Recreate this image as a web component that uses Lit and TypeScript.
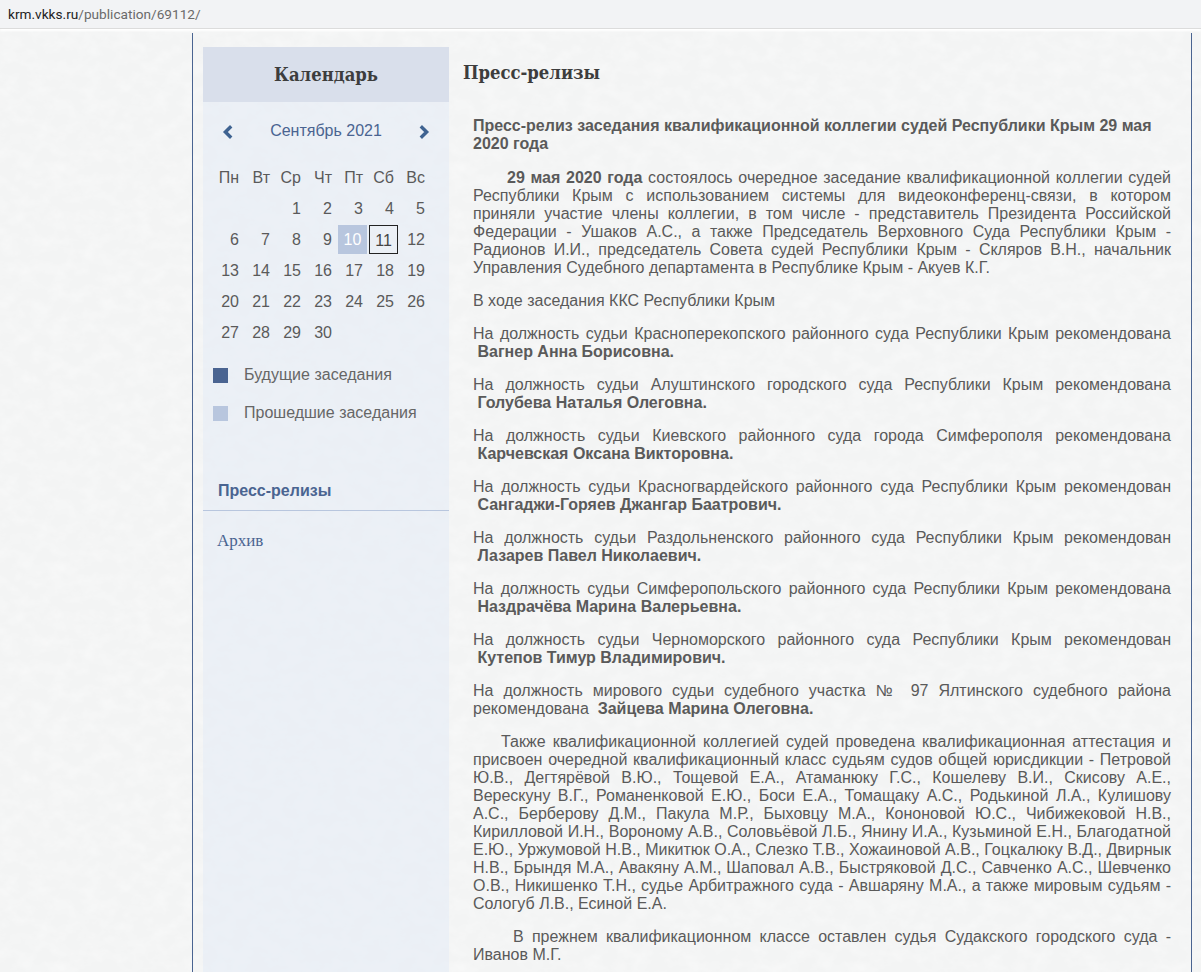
import { LitElement, html, css } from "lit";
import { customElement } from "lit/decorators.js";

const texture = `url("data:image/svg+xml,%3Csvg xmlns='http://www.w3.org/2000/svg' width='400' height='400'%3E%3Cfilter id='n' x='0' y='0' width='100%25' height='100%25'%3E%3CfeTurbulence type='fractalNoise' baseFrequency='0.06 0.08' numOctaves='4' seed='7' stitchTiles='stitch'/%3E%3CfeColorMatrix values='0 0 0 0 1 0 0 0 0 1 0 0 0 0 1 0.7 0 0 0 -0.27'/%3E%3C/filter%3E%3Crect width='400' height='400' filter='url(%23n)'/%3E%3C/svg%3E")`;

const weeks: (number | null)[][] = [
  [null, null, 1, 2, 3, 4, 5],
  [6, 7, 8, 9, 10, 11, 12],
  [13, 14, 15, 16, 17, 18, 19],
  [20, 21, 22, 23, 24, 25, 26],
  [27, 28, 29, 30, null, null, null],
];
const days = ["Пн", "Вт", "Ср", "Чт", "Пт", "Сб", "Вс"];

const appts: [string, string][] = [
  ["На должность судьи Красноперекопского районного суда Республики Крым рекомендована", "Вагнер Анна Борисовна."],
  ["На должность судьи Алуштинского городского суда Республики Крым рекомендована", "Голубева Наталья Олеговна."],
  ["На должность судьи Киевского районного суда города Симферополя рекомендована", "Карчевская Оксана Викторовна."],
  ["На должность судьи Красногвардейского районного суда Республики Крым рекомендован", "Сангаджи-Горяев Джангар Баатрович."],
  ["На должность судьи Раздольненского районного суда Республики Крым рекомендован", "Лазарев Павел Николаевич."],
  ["На должность судьи Симферопольского районного суда Республики Крым рекомендована", "Наздрачёва Марина Валерьевна."],
  ["На должность судьи Черноморского районного суда Республики Крым рекомендован", "Кутепов Тимур Владимирович."],
];

@customElement("app-root")
export class AppRoot extends LitElement {
  static styles = css`
    :host {
      display: block;
      height: 972px;
      overflow: hidden;
      background-color: #f3f4f4;
      background-image: ${css([texture] as unknown as TemplateStringsArray)};
      font-family: "Liberation Sans", Arial, sans-serif;
      font-size: 16px;
      color: #5a5a5a;
    }
    .urlbar {
      height: 28px;
      padding-left: 8px;
      background: #f2f3f5;
      border-bottom: 1px solid #dcdcdc;
      box-shadow: 0 2px 2px #fff;
      font-family: Roboto, "Noto Sans", sans-serif;
      font-size: 13.65px;
      line-height: 28px;
      color: #6a6a6a;
      position: relative;
    }
    .urlbar b { font-weight: 400; color: #222; }
    .wrap {
      box-sizing: border-box;
      width: 1000px;
      height: 939px;
      margin-left: 192px;
      margin-top: 4px;
      padding: 14px 0 0 10px;
      border-left: 1px solid #4a6491;
      border-right: 1px solid #4a6491;
      display: flex;
    }
    .side {
      flex: none;
      width: 246px;
      background: rgba(232, 237, 246, 0.75);
    }
    .side-title {
      height: 55px;
      background: #d9dfeb;
      text-align: center;
      font: bold 18.3px/56px "DejaVu Serif", serif;
      font-stretch: condensed;
      color: #3d3d3d;
    }
    .month {
      display: flex;
      align-items: center;
      justify-content: space-between;
      height: 28px;
      margin: 16px 0 0;
      padding: 0 19px;
      color: #4a6491;
    }
    .month span { position: relative; top: -1px; }
    .month svg { display: block; }
    .cal {
      display: grid;
      grid-template-columns: repeat(7, 29px);
      grid-auto-rows: 29px;
      gap: 2px;
      margin: 17px 0 0 11px;
    }
    .cell {
      box-sizing: border-box;
      padding-right: 4px;
      text-align: right;
      line-height: 29px;
    }
    .cell.past {
      padding: 0;
      text-align: center;
      background: #b8c6de;
      color: #fff;
    }
    .cell.today {
      padding: 0;
      text-align: center;
      border: 1px solid #222;
      line-height: 29px;
      color: #444;
    }
    .legend {
      display: flex;
      align-items: center;
      gap: 16px;
      height: 38px;
      padding-left: 10px;
      color: #666;
    }
    .legend i { display: block; width: 15px; height: 15px; }
    .legend.first { margin-top: 9px; }
    .future-sw { background: #4a6491; }
    .past-sw { background: #b8c6de; }
    .sub {
      margin-top: 39px;
      height: 39px;
      padding-left: 15px;
      border-bottom: 1px solid #b8c6de;
      font-weight: bold;
      line-height: 39px;
      color: #4a6491;
    }
    .arch {
      display: block;
      margin: 20px 0 0 14px;
      font: 17px/20px "Liberation Serif", serif;
      color: #4a6491;
      text-decoration: none;
    }
    .main { flex: 1; padding: 14px 0 0 14px; }
    h1 {
      margin: 0;
      font: bold 18.3px/24px "DejaVu Serif", serif;
      font-stretch: condensed;
      color: #3d3d3d;
    }
    .article {
      width: 698px;
      margin: 32px 0 0 10px;
      line-height: 18px;
      text-align: justify;
    }
    .article p { margin: 0 0 15px; }
    .article h2 {
      margin: 0 0 16px;
      font: inherit;
      font-weight: bold;
      text-align: left;
    }
    .nb { display: inline-block; width: 2.5px; }
    .i34 { text-indent: 34px; }
    .i28 { text-indent: 28px; }
    .i40 { text-indent: 40px; }
  `;

  render() {
    return html`
      <div class="urlbar"><b>krm.vkks.ru</b>/publication/69112/</div>
      <div class="wrap">
        <aside class="side">
          <div class="side-title">Календарь</div>
          <div class="month">
            <svg width="12" height="14" viewBox="0 0 12 14"><path d="M9.2 1.3 3.4 7l5.8 5.7" fill="none" stroke="#3f6391" stroke-width="3.4"/></svg>
            <span>Сентябрь 2021</span>
            <svg width="12" height="14" viewBox="0 0 12 14"><path d="M2.8 1.3 8.6 7l-5.8 5.7" fill="none" stroke="#3f6391" stroke-width="3.4"/></svg>
          </div>
          <div class="cal">
            ${days.map((d) => html`<div class="cell">${d}</div>`)}
            ${weeks.flat().map(
              (n) => html`<div class="cell ${n === 10 ? "past" : n === 11 ? "today" : ""}">${n ?? ""}</div>`
            )}
          </div>
          <div class="legend first"><i class="future-sw"></i>Будущие заседания</div>
          <div class="legend"><i class="past-sw"></i>Прошедшие заседания</div>
          <div class="sub">Пресс-релизы</div>
          <a class="arch" href="#">Архив</a>
        </aside>
        <main class="main">
          <h1>Пресс-релизы</h1>
          <div class="article">
            <h2>Пресс-релиз заседания квалификационной коллегии судей Республики Крым 29 мая 2020 года</h2>
            <p class="i34"><b>29 мая 2020 года</b> состоялось очередное заседание квалификационной коллегии судей Республики Крым с использованием системы для видеоконференц-связи, в котором приняли участие члены коллегии, в том числе - представитель Президента Российской Федерации - Ушаков А.С., а также Председатель Верховного Суда Республики Крым - Радионов И.И., председатель Совета судей Республики Крым - Скляров В.Н., начальник Управления Судебного департамента в Республике Крым - Акуев К.Г.</p>
            <p>В ходе заседания ККС Республики Крым</p>
            ${appts.map(([t, n]) => html`<p>${t} &nbsp;<b>${n}</b></p>`)}
            <p>На должность мирового судьи судебного участка №<span class="nb"></span> 97 Ялтинского судебного района рекомендована &nbsp;<b>Зайцева Марина Олеговна.</b></p>
            <p class="i28">Также квалификационной коллегией судей проведена квалификационная аттестация и присвоен очередной квалификационный класс судьям судов общей юрисдикции - Петровой Ю.В., Дегтярёвой В.Ю., Тощевой Е.А., Атаманюку Г.С., Кошелеву В.И., Скисову А.Е., Верескуну В.Г., Романенковой Е.Ю., Боси Е.А., Томащаку А.С., Родькиной Л.А., Кулишову А.С., Берберову Д.М., Пакула М.Р., Быховцу М.А., Кононовой Ю.С., Чибижековой Н.В., Кирилловой И.Н., Вороному А.В., Соловьёвой Л.Б., Янину И.А., Кузьминой Е.Н., Благодатной Е.Ю., Уржумовой Н.В., Микитюк О.А., Слезко Т.В., Хожаиновой А.В., Гоцкалюку В.Д., Двирнык Н.В., Брындя М.А., Авакяну А.М., Шаповал А.В., Быстряковой Д.С., Савченко А.С., Шевченко О.В., Никишенко Т.Н., судье Арбитражного суда - Авшаряну М.А., а также мировым судьям - Сологуб Л.В., Есиной Е.А.</p>
            <p class="i40">В прежнем квалификационном классе оставлен судья Судакского городского суда - Иванов М.Г.</p>
          </div>
        </main>
      </div>
    `;
  }
}
